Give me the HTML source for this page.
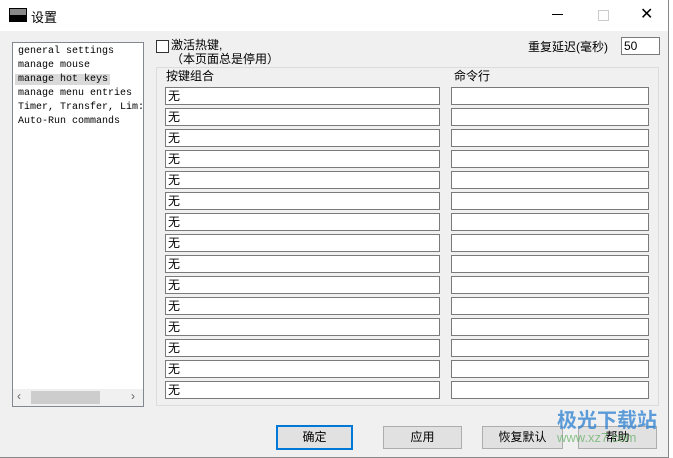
<!DOCTYPE html><html><head><meta charset="utf-8"><style>
body{margin:0;width:673px;height:458px;position:relative;overflow:hidden;background:#fff;font-family:"Liberation Sans","Noto Sans CJK SC",sans-serif;font-size:12px;color:#000}
.a{position:absolute}
.win{left:0;top:0;width:668px;height:457px;border-right:1px solid #888;border-bottom:1px solid #888;background:#f0f0f0}
.tb{left:0;top:0;width:668px;height:31px;background:#fff}
.f{position:absolute;height:16px;border:1px solid #7a7a7a;background:#fff;font-size:12px;line-height:16px;padding-left:2px;box-sizing:content-box}
.btn{position:absolute;top:426px;height:21px;background:#e1e1e1;border:1px solid #adadad;text-align:center;line-height:21px;font-size:12px}
.li{font-family:"Liberation Mono",monospace;font-size:10px;line-height:14px;padding-left:5px;white-space:nowrap}
</style></head><body>
<div class="a win"></div>
<div class="a tb"></div>
<div class="a" style="left:9px;top:8px;width:16px;height:6px;background:#888;border:1px solid #000;border-bottom:none"></div>
<div class="a" style="left:9px;top:15px;width:18px;height:7px;background:#000"></div>
<div class="a" style="left:31px;top:7px;font-size:13px">设置</div>
<div class="a" style="left:552px;top:14px;width:11px;height:1px;background:#000"></div>
<div class="a" style="left:598px;top:10px;width:9px;height:9px;border:1px solid #ccc"></div>
<div class="a" style="left:640px;top:6px;font-size:16px;line-height:18px">✕</div>

<div class="a" style="left:12px;top:42px;width:130px;height:363px;border:1px solid #828790;background:#fff;overflow:hidden">
<div style="height:2px"></div>
<div class="li">general settings</div>
<div class="li">manage mouse</div>
<div class="li"><span style="background:#d9d9d9;margin-left:-3px;padding:0 2px 0 3px">manage hot keys</span></div>
<div class="li">manage menu entries</div>
<div class="li">Timer, Transfer, Lim:</div>
<div class="li">Auto-Run commands</div>
<div class="a" style="left:0;top:346px;width:130px;height:17px;background:#f0f0f0"></div>
<div class="a" style="left:18px;top:348px;width:69px;height:13px;background:#cdcdcd"></div>
<div class="a" style="left:4px;top:346px;font-size:12px;color:#606060">‹</div>
<div class="a" style="left:118px;top:346px;font-size:12px;color:#606060">›</div>
</div>

<div class="a" style="left:156px;top:40px;width:11px;height:11px;border:1px solid #333;background:#fff"></div>
<div class="a" style="left:171px;top:38px;line-height:14px">激活热键,<br>（本页面总是停用）</div>
<div class="a" style="left:528px;top:38px">重复延迟(毫秒)</div>
<div class="f" style="left:621px;top:37px;width:35px">50</div>

<div class="a" style="left:156px;top:67px;width:501px;height:337px;border:1px solid #dcdcdc"></div>
<div class="a" style="left:166px;top:67px">按键组合</div>
<div class="a" style="left:454px;top:67px">命令行</div>
<div id="rows"></div>
<script>
var h='';for(var i=0;i<15;i++){var y=87+i*21;h+='<div class="f" style="left:165px;top:'+y+'px;width:271px">无</div><div class="f" style="left:451px;top:'+y+'px;width:194px"></div>';}
document.getElementById('rows').innerHTML=h;
</script>

<div class="btn" style="left:276px;width:73px;border:2px solid #0078d7;top:425px">确定</div>
<div class="btn" style="left:383px;width:77px">应用</div>
<div class="btn" style="left:482px;width:79px">恢复默认</div>
<div class="btn" style="left:578px;width:77px">帮助</div>
<div class="a" style="left:557px;top:404px;font-size:20px;font-weight:bold;color:#2a7fd0;opacity:.75">极光下载站</div>
<div class="a" style="left:557px;top:430px;font-size:13px;color:#4aa64a;opacity:.6">www.xz7.com</div>
</body></html>
